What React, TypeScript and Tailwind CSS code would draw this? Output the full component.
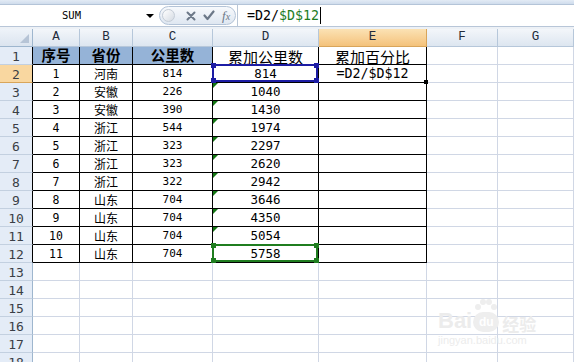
const provinces = ["河南", "安徽", "安徽", "浙江", "浙江", "浙江", "浙江", "山东", "山东", "山东", "山东"];
const km = [814, 226, 390, 544, 323, 323, 322, 704, 704, 704, 704];
const total = [814, 1040, 1430, 1974, 2297, 2620, 2942, 3646, 4350, 5054, 5758];
const letters = ["A", "B", "C", "D", "E", "F", "G"];
const rows = Array.from({ length: 18 }, (_, i) => i + 1);

const mono = "font-['DejaVu_Sans_Mono','Noto_Sans_CJK_SC',monospace]";
const cjk = "font-['Noto_Sans_CJK_SC',sans-serif]";

function Handle({ pos, color }: { pos: string; color: string }) {
  return <div className={`absolute w-[5px] h-[5px] ${pos} ${color}`} />;
}

function RefBox({ border, fill }: { border: string; fill: string }) {
  return (
    <div className={`absolute -top-[1px] -left-[1px] right-0 bottom-0 border-2 z-10 ${border}`}>
      <Handle pos="-top-[3px] -left-[3px]" color={fill} />
      <Handle pos="-top-[3px] -right-[3px]" color={fill} />
      <Handle pos="-bottom-[3px] -left-[3px]" color={fill} />
      <Handle pos="-bottom-[3px] -right-[3px]" color={fill} />
    </div>
  );
}

function Cell({ r, c }: { r: number; c: number }) {
  const inTable = r <= 12 && c <= 4;
  const line = inTable ? "border-black" : "border-[#d0d7e5]";
  const base = `relative h-[18px] border-r border-b ${line} flex items-center justify-center text-black`;

  if (r === 1) {
    if (c <= 2) {
      const t = ["序号", "省份", "公里数"][c];
      return <div className={`${base} bg-[#95b3d7] ${cjk} font-bold text-[14.5px] leading-none`}>{t}</div>;
    }
    if (c <= 4) {
      const t = c === 3 ? "累加公里数" : "累加百分比";
      return <div className={`${base} bg-white ${cjk} text-[15px] leading-none pt-[1px]`}>{t}</div>;
    }
    return <div className={`${base} bg-white`} />;
  }

  if (r <= 12) {
    const i = r - 2;
    if (c === 0) return <div className={`${base} bg-white ${mono} text-[11.5px] pt-[2px]`}>{i + 1}</div>;
    if (c === 1) return <div className={`${base} bg-white ${cjk} text-[12px] leading-none pt-[1px]`}>{provinces[i]}</div>;
    if (c === 2) return <div className={`${base} bg-white ${mono} text-[11px] pt-[2px]`}>{km[i]}</div>;
    if (c === 3)
      return (
        <div className={`${base} bg-white ${mono} text-[12.5px] pt-[2px]`}>
          {total[i]}
          {r === 2 && <RefBox border="border-[#1c1ca4]" fill="bg-[#1c1ca4]" />}
          {r === 12 && <RefBox border="border-[#1f7d1f]" fill="bg-[#1f7d1f]" />}
          {r > 2 && r < 12 && (
            <div className="absolute top-0 left-0 w-[5px] h-[5px] bg-[#137613] [clip-path:polygon(0_0,100%_0,0_100%)]" />
          )}
        </div>
      );
    if (c === 4 && r === 2)
      return (
        <div className={`${base} bg-white ${mono} text-[13.3px] pt-[1px]`}>
          =D2/$D$12
          <div className="absolute -bottom-[2px] -right-[2px] w-[4px] h-[4px] bg-black z-10" />
        </div>
      );
  }
  return <div className={`${base} bg-white`} />;
}

export default function App() {
  return (
    <div className="relative w-[574px] h-[362px] overflow-hidden bg-white select-none">
      <div className="h-[5px] bg-gradient-to-b from-[#e3ebf5] to-[#cfdcec] border-b border-[#b4c4d8]" />

      <div className="flex h-[21px] bg-white">
        <div className={`w-[143px] flex items-center justify-center ${mono} text-[10.5px] text-black`}>SUM</div>
        <div className="w-[14px] flex items-center justify-center">
          <div className="w-0 h-0 border-l-[4px] border-r-[4px] border-t-[4px] border-l-transparent border-r-transparent border-t-black" />
        </div>
        <div className="ml-[2px] my-[1px] w-[77px] rounded-full border border-[#b3c3d7] bg-gradient-to-b from-[#f7f9fc] to-[#dfe7f1] flex items-center">
          <div className="ml-[2px] w-[13px] h-[13px] rounded-full border border-[#c4ccd6] bg-gradient-to-br from-white to-[#d5dbe3]" />
          <svg className="ml-[11px]" width="10" height="10" viewBox="0 0 10 10">
            <path d="M1.5 1.5 L8.5 8.5 M8.5 1.5 L1.5 8.5" stroke="#6c7888" strokeWidth="2" strokeLinecap="round" />
          </svg>
          <svg className="ml-[7px]" width="12" height="11" viewBox="0 0 12 11">
            <path d="M1.5 5.5 L4.5 9 L10.5 1.5" stroke="#6c7888" strokeWidth="2.2" fill="none" strokeLinecap="round" strokeLinejoin="round" />
          </svg>
          <span className="ml-[7px] font-['Liberation_Serif',serif] italic text-[13px] leading-none text-[#6c7888]">
            f<span className="text-[10px]">x</span>
          </span>
        </div>
        <div className={`flex-1 ml-[1px] border-l border-[#b9c6d6] pl-[9px] flex items-center ${mono} text-[13.3px] text-black`}>
          =D2/<span className="text-[#1f7d1f]">$D$12</span>
          <span className="ml-[1px] w-[1px] h-[17px] bg-black" />
        </div>
      </div>

      <div className="h-[1px] bg-[#b8c6d8]" />
      <div className="h-[2px] bg-[#edf1f6]" />

      <div className="grid grid-cols-[33px_47px_53px_80px_106px_108px_71px_76px]">
        <div className="relative h-[18px] bg-gradient-to-b from-[#eef3f9] to-[#dbe4ef] border-r border-b border-[#9eb6ce]">
          <div className="absolute right-[3px] bottom-[3px] w-[9px] h-[9px] bg-[#b6c4d6] [clip-path:polygon(100%_0,100%_100%,0_100%)]" />
        </div>
        {letters.map((l) => (
          <div
            key={l}
            className={`h-[18px] border-r border-b flex items-center justify-center font-['Liberation_Mono',monospace] text-[12.5px] text-[#222b3a] ${
              l === "E"
                ? "bg-gradient-to-b from-[#fbe2b4] to-[#f4c27a] border-[#d8a55a]"
                : "bg-gradient-to-b from-[#f3f6fa] to-[#dde6f0] border-[#b6c7da]"
            }`}
          >
            {l}
          </div>
        ))}

        {rows.map((r) => (
          <div key={r} className="contents">
            <div
              className={`h-[18px] border-r border-b flex items-center justify-center ${mono} text-[13px] pt-[2px] text-[#3b3f46] ${
                r === 2 ? "bg-[#f9d7a0] border-b-[#d8a55a]" : "bg-[#e4ecf7] border-b-[#c3d0e0]"
              } ${r <= 12 ? "border-r-black" : "border-r-[#9eb6ce]"}`}
            >
              {r}
            </div>
            {letters.map((_, c) => (
              <Cell key={c} r={r} c={c} />
            ))}
          </div>
        ))}
      </div>

      <div className="absolute left-[438px] top-[298px] w-[110px] pointer-events-none text-[#ececec]">
        <div className="flex items-end">
          <span className="font-['Liberation_Sans',sans-serif] font-bold text-[22px] leading-none">Bai</span>
          <span className="ml-[1px] relative flex flex-col items-center">
            <svg width="26" height="14" viewBox="0 0 26 14">
              <circle cx="5" cy="9" r="3" fill="#eeeeee" />
              <circle cx="10" cy="4" r="3" fill="#eeeeee" />
              <circle cx="16" cy="4" r="3" fill="#eeeeee" />
              <circle cx="21" cy="9" r="3" fill="#eeeeee" />
            </svg>
            <span className="w-[26px] h-[20px] rounded-full bg-[#eeeeee] text-white text-[12px] font-bold leading-[20px] text-center font-['Liberation_Sans',sans-serif]">
              du
            </span>
          </span>
          <span className={`ml-[3px] ${cjk} font-bold text-[17px] leading-none`}>经验</span>
        </div>
        <div className="mt-[3px] font-['Liberation_Sans',sans-serif] text-[11px] leading-none">jingyan.baidu.com</div>
      </div>
    </div>
  );
}
